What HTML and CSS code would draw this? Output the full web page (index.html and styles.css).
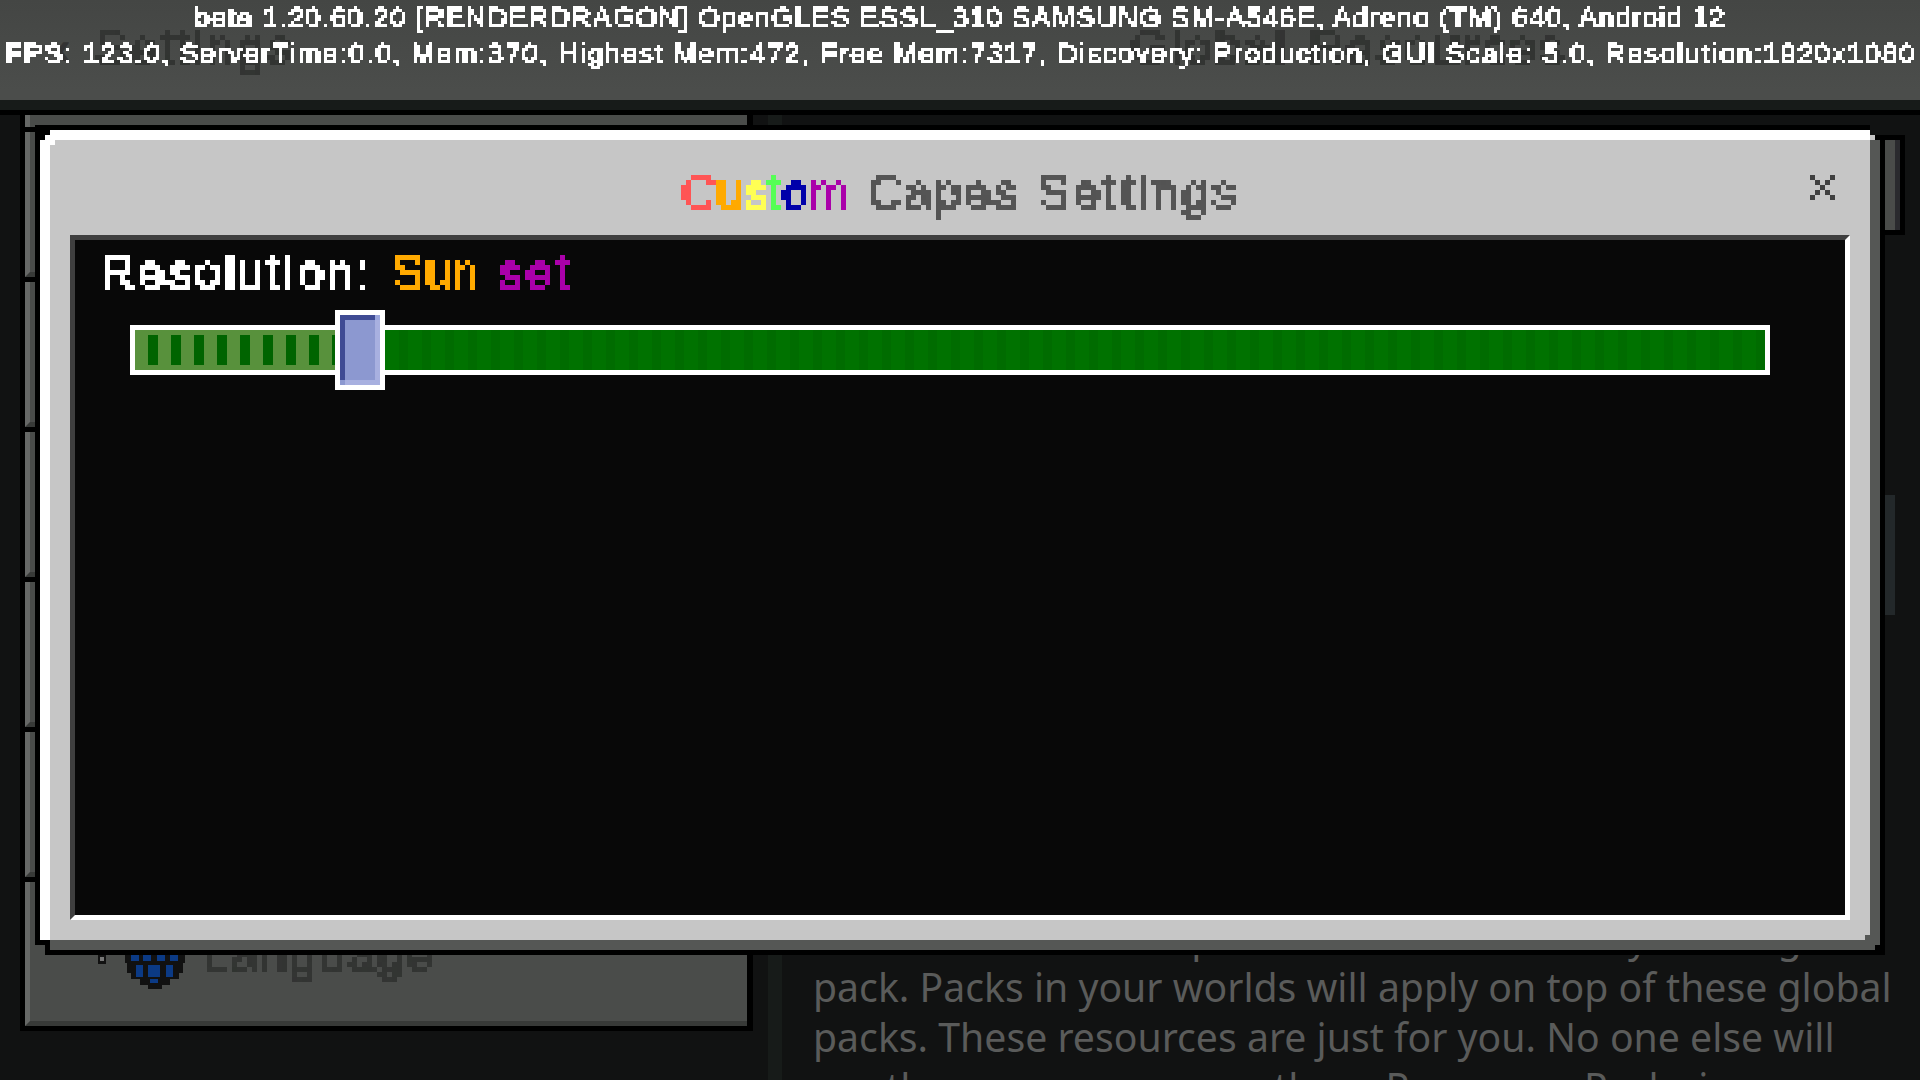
FILE: index.html
```html
<!DOCTYPE html>
<html lang="en">
<head>
<meta charset="utf-8">
<title>Custom Capes Settings</title>
<link rel="stylesheet" href="styles.css">
</head>
<body>
<svg class="defs" width="0" height="0" aria-hidden="true">
  <filter id="pix5" x="0" y="0" width="100%" height="100%" color-interpolation-filters="sRGB" filterUnits="objectBoundingBox" primitiveUnits="userSpaceOnUse">
    <feFlood x="2" y="2" width="1" height="1" flood-color="#000"/>
    <feComposite x="0" y="0" width="5" height="5"/>
    <feTile result="grid"/>
    <feComposite in="SourceGraphic" in2="grid" operator="in"/>
    <feMorphology operator="dilate" radius="2"/>
    <feComponentTransfer><feFuncA type="discrete" tableValues="0 1 1 1"/></feComponentTransfer>
  </filter>
  <filter id="pix3" x="0" y="0" width="100%" height="100%" color-interpolation-filters="sRGB" primitiveUnits="userSpaceOnUse">
    <feFlood x="1" y="1" width="1" height="1" flood-color="#000"/>
    <feComposite x="0" y="0" width="3" height="3"/>
    <feTile result="grid"/>
    <feComposite in="SourceGraphic" in2="grid" operator="in"/>
    <feMorphology operator="dilate" radius="1"/>
    <feComponentTransfer><feFuncA type="discrete" tableValues="0 1 1 1"/></feComponentTransfer>
  </filter>
</svg>

<div class="screen">
  <header class="topbar">
    <div class="ghost-left"><span class="back">‹</span><span class="mc ghost">Settings</span></div>
    <div class="ghost-right"><span class="mc ghost">Global Resources</span></div>
    <div class="debug">
      <p class="debug-line first">beta 1.20.60.20 [RENDERDRAGON] OpenGLES ESSL_310 SAMSUNG SM-A546E, Adreno (TM) 640, Android 12</p>
      <p class="debug-line second">FPS: 123.0, ServerTime:0.0, Mem:370, Highest Mem:472, Free Mem:7317, Discovery: Production, GUI Scale: 5.0, Resolution:1920x1080</p>
    </div>
  </header>

  <main class="main">
    <nav class="menu">
      <div class="menu-row stub"></div>
      <div class="menu-row"></div>
      <div class="menu-row"></div>
      <div class="menu-row"></div>
      <div class="menu-row"></div>
      <div class="menu-row"></div>
      <div class="menu-row language">
        <svg class="globe" width="90" height="36" viewBox="0 0 90 36" aria-hidden="true">
          <rect x="0" y="2" width="8" height="9" fill="#111"/><rect x="2" y="4" width="4" height="4" fill="#777"/>
          <rect x="27" y="0" width="60" height="10" fill="#111"/>
          <rect x="29" y="10" width="56" height="10" fill="#111"/>
          <rect x="33" y="20" width="48" height="6" fill="#111"/>
          <rect x="42" y="26" width="30" height="6" fill="#111"/>
          <rect x="50" y="32" width="14" height="4" fill="#111"/>
          <g fill="#0b3a85">
            <rect x="33" y="2" width="8" height="6"/><rect x="45" y="2" width="8" height="6"/><rect x="59" y="2" width="8" height="6"/><rect x="72" y="2" width="8" height="6"/>
            <rect x="38" y="12" width="7" height="12"/><rect x="50" y="12" width="12" height="12"/><rect x="68" y="12" width="7" height="12"/>
            <rect x="52" y="26" width="8" height="4"/>
          </g>
        </svg>
        <span class="mc row-label">Language</span>
      </div>
    </nav>
    <div class="divider"></div>
    <section class="content">
      <div class="bar top-bar"></div>
      <div class="bar low-bar"></div>
      <p class="body-line">These resources are put on all worlds like any existing</p>
      <p class="body-line">pack. Packs in your worlds will apply on top of these global</p>
      <p class="body-line">packs. These resources are just for you. No one else will</p>
      <p class="body-line">see them, on a server, or these Resources Packs in</p>
    </section>
  </main>

  <div class="modal">
    <div class="modal-head">
      <span></span>
      <h1 class="mc title"><span class="w-custom"><span class="c-red">C</span><span class="c-orange">u</span><span class="c-yellow">s</span><span class="c-green">t</span><span class="c-navy">o</span><span class="c-purple">m</span></span> <span class="w-capes">Capes</span> <span class="w-settings">Settings</span></h1>
      <svg class="close" width="25" height="25" viewBox="0 0 5 5" shape-rendering="crispEdges" aria-label="Close">
        <path d="M0 0h1v1H0zM4 0h1v1H4zM1 1h1v1H1zM3 1h1v1H3zM2 2h1v1H2zM1 3h1v1H1zM3 3h1v1H3zM0 4h1v1H0zM4 4h1v1H4z" fill="#3f3f3f"/>
      </svg>
    </div>
    <div class="modal-body">
      <div class="mc res-label"><span class="w-res">Resolution:</span> <span class="c-orange">Sun</span> <span class="c-purple w-set">set</span></div>
      <div class="slider">
        <div class="fill-on"></div>
        <div class="thumb"></div>
        <div class="fill-off"></div>
      </div>
    </div>
  </div>
</div>
</body>
</html>
```

FILE: styles.css
```css
* { box-sizing: border-box; margin: 0; padding: 0; }
html, body { width: 1920px; height: 1080px; overflow: hidden; background: #111212; }
.defs { display: block; height: 0; }
.screen { position: relative; width: 1920px; height: 1080px; overflow: hidden; display: flex; flex-direction: column; }

/* pixel-style text */
.mc { font-family: "Liberation Sans Narrow", "Liberation Sans", sans-serif; font-weight: 400; font-size: 48px; line-height: 55px; letter-spacing: 1px; word-spacing: 4px; white-space: pre; -webkit-text-stroke: 1.6px currentColor; filter: url(#pix5); }
.w-custom { letter-spacing: .6px; }
.w-capes { letter-spacing: 2.5px; }
.w-settings { letter-spacing: 3.5px; }
.w-res { letter-spacing: 3px; }
.w-set { letter-spacing: 3.5px; }

/* top bar */
.topbar { position: relative; flex: none; height: 110px; background: linear-gradient(#444644, #4b4d4b 90px); border-bottom: 10px solid #171b19; display: flex; }
.ghost-left { flex: none; width: 960px; padding: 20px 0 0 55px; display: flex; align-items: flex-start; }
.ghost-right { flex: none; width: 700px; padding: 20px 0 0 170px; }
.back { font: 700 48px/55px "Liberation Sans", sans-serif; color: #333; width: 40px; }
.ghost { display: inline-block; color: #333533; letter-spacing: 3.2px; }
.debug { position: absolute; inset: 0 0 auto 0; font: 400 28px/36px "Liberation Sans Narrow", "Liberation Sans", sans-serif; -webkit-text-stroke: .9px #fff; color: #fff; white-space: nowrap; filter: url(#pix3); }
.debug-line.first { text-align: center; letter-spacing: 1.2px; }
.debug-line.second { padding-left: 5px; letter-spacing: 1.6px; }

/* background columns */
.main { flex: 1; display: flex; border-top: 5px solid #000; min-height: 0; }
.menu { flex: none; width: 733px; height: 916px; margin-left: 20px; border: solid #000; border-width: 0 6px 5px 5px; background: #000; display: flex; flex-direction: column; gap: 5px; }
.menu-row { flex: none; height: 145px; background: #4a4c4a; border-left: 5px solid #666866; border-bottom: 5px solid #383a38; }
.menu-row.stub { height: 12px; border-bottom: 0; }
.menu-row.language { display: flex; align-items: flex-start; gap: 14px; padding: 71px 0 0 68px; height: 144px; }
.globe { flex: none; }
.row-label { color: #333533; margin-top: -26px; letter-spacing: 2.5px; }
.divider { flex: none; width: 14px; margin-left: 15px; background: #171b19; }
.content { position: relative; flex: 1; padding: 797px 0 0 31px; color: #5a5b5a; font: 400 39.2px/50px "Noto Sans", sans-serif; white-space: nowrap; overflow: hidden; }
.bar { position: absolute; border: 5px solid #000; width: 25px; }
.top-bar { left: 1098px; top: 20px; height: 100px; background: linear-gradient(90deg, #4a4c4a 10px, #2a2a2e 10px); }
.low-bar { left: 1103px; top: 380px; height: 120px; border: 0; width: 10px; background: #23282a; }

/* modal */
.modal {
  position: absolute; left: 40px; top: 130px; width: 1840px; height: 820px;
  padding: 0 30px 30px; display: flex; flex-direction: column;
  background:
    linear-gradient(#fff, #fff) 10px 0 / 1820px 10px no-repeat,
    linear-gradient(#fff, #fff) 0 10px / 10px 800px no-repeat,
    linear-gradient(#fff, #fff) 5px 5px / 5px 5px no-repeat,
    linear-gradient(#fff, #fff) 10px 10px / 5px 5px no-repeat,
    linear-gradient(#c6c6c6, #c6c6c6) 1830px 5px / 5px 5px no-repeat,
    linear-gradient(#555755, #555755) 1825px 805px / 5px 5px no-repeat,
    linear-gradient(#555755, #555755) 1830px 10px / 10px 805px no-repeat,
    linear-gradient(#555755, #555755) 10px 810px / 1825px 10px no-repeat,
    linear-gradient(#c6c6c6, #c6c6c6) 10px 10px / 1820px 800px no-repeat,
    #000;
  box-shadow: 0 0 0 5px #000;
}
.modal::before { content: ""; position: absolute; left: 1830px; top: -5px; width: 15px; height: 10px; background: #111212; }
.modal::after { content: ""; position: absolute; left: -5px; top: 815px; width: 10px; height: 10px; background: #4a4c4a; }
.modal-head { flex: none; height: 105px; display: grid; grid-template-columns: 1fr auto 1fr; align-items: start; padding-top: 35px; }
.title { color: #555; font-size: 48px; font-weight: 400; }
.close { justify-self: end; margin: 10px 15px 0 0; }
.modal-body { flex: 1; background: #080808; border: 5px solid; border-color: #3f3f3f #fff #fff #3f3f3f; padding: 5px 0 0 0; }
.res-label { color: #fff; padding-left: 25px; width: 600px; margin-bottom: 25px; }
.c-red { color: #ff5555; } .c-orange { color: #ffaa00; } .c-yellow { color: #ffff55; } .c-green { color: #55ff55; } .c-navy { color: #0000aa; } .c-purple { color: #aa00aa; }

/* slider */
.slider { display: flex; align-items: center; height: 50px; margin: 0 75px 0 55px; border: 5px solid #fff; }
.fill-on { position: relative; width: 200px; height: 40px; background: #58913c; }
.fill-on::after { content: ""; position: absolute; inset: 5px 0; background: repeating-linear-gradient(90deg, transparent 0 13px, #006400 13px 23px); }
.thumb {
  flex: none; width: 50px; height: 80px; border: 5px solid #fff;
  background:
    linear-gradient(#9aa5dc, #9aa5dc) 100% 0 / 5px 5px no-repeat,
    linear-gradient(#8c98d0, #8c98d0) 0 100% / 5px 5px no-repeat,
    linear-gradient(#3f4b94, #3f4b94) 0 0 / 100% 5px no-repeat,
    linear-gradient(#3f4b94, #3f4b94) 0 0 / 5px 100% no-repeat,
    linear-gradient(#a8b0e0, #a8b0e0) 100% 0 / 5px 100% no-repeat,
    linear-gradient(#a8b0e0, #a8b0e0) 0 100% / 100% 5px no-repeat,
    #8c98d0;
}
.fill-off { flex: 1; height: 40px; background: repeating-linear-gradient(90deg, #007200 0 14px, #006c00 14px 23px); }
```
